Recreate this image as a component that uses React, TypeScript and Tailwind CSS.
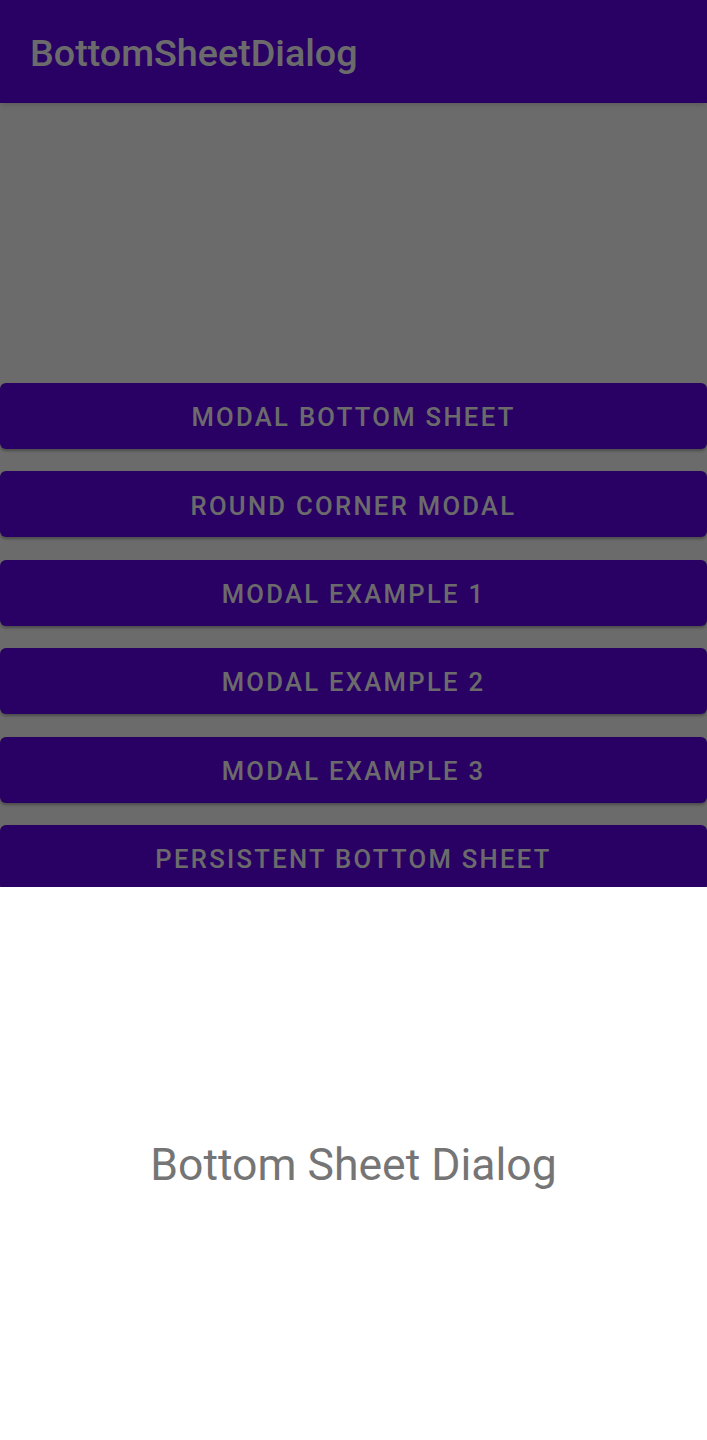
const buttons = [
  "Modal Bottom Sheet",
  "Round Corner Modal",
  "Modal Example 1",
  "Modal Example 2",
  "Modal Example 3",
  "Persistent Bottom Sheet",
];

export default function App() {
  return (
    <div
      className="relative h-[1440px] w-full overflow-hidden bg-white"
      style={{ fontFamily: "Roboto, 'Noto Sans', sans-serif" }}
    >
      {/* App bar */}
      <header className="flex h-[103px] items-center bg-[#6200ee] pl-[30px] pt-[4px] shadow-md">
        <h1 className="text-[37.7px] font-medium text-white">BottomSheetDialog</h1>
      </header>

      {/* Buttons */}
      <div className="flex flex-col gap-[22.4px] pt-[280px]">
        {buttons.map((label) => (
          <button
            key={label}
            className="flex h-[66px] w-full items-center justify-center rounded-[6px] bg-[#6200ee] pt-[3px] text-[25.6px] font-medium uppercase tracking-[0.09em] text-white shadow-[0_2px_3px_rgba(0,0,0,0.3)]"
          >
            {label}
          </button>
        ))}
      </div>

      {/* Scrim */}
      <div className="absolute inset-0 bg-black/[0.58]" />

      {/* Bottom sheet */}
      <div className="absolute inset-x-0 bottom-0 flex h-[553px] items-center justify-center bg-white pt-[3px]">
        <p className="text-[44.5px] text-[#757575]">Bottom Sheet Dialog</p>
      </div>
    </div>
  );
}
